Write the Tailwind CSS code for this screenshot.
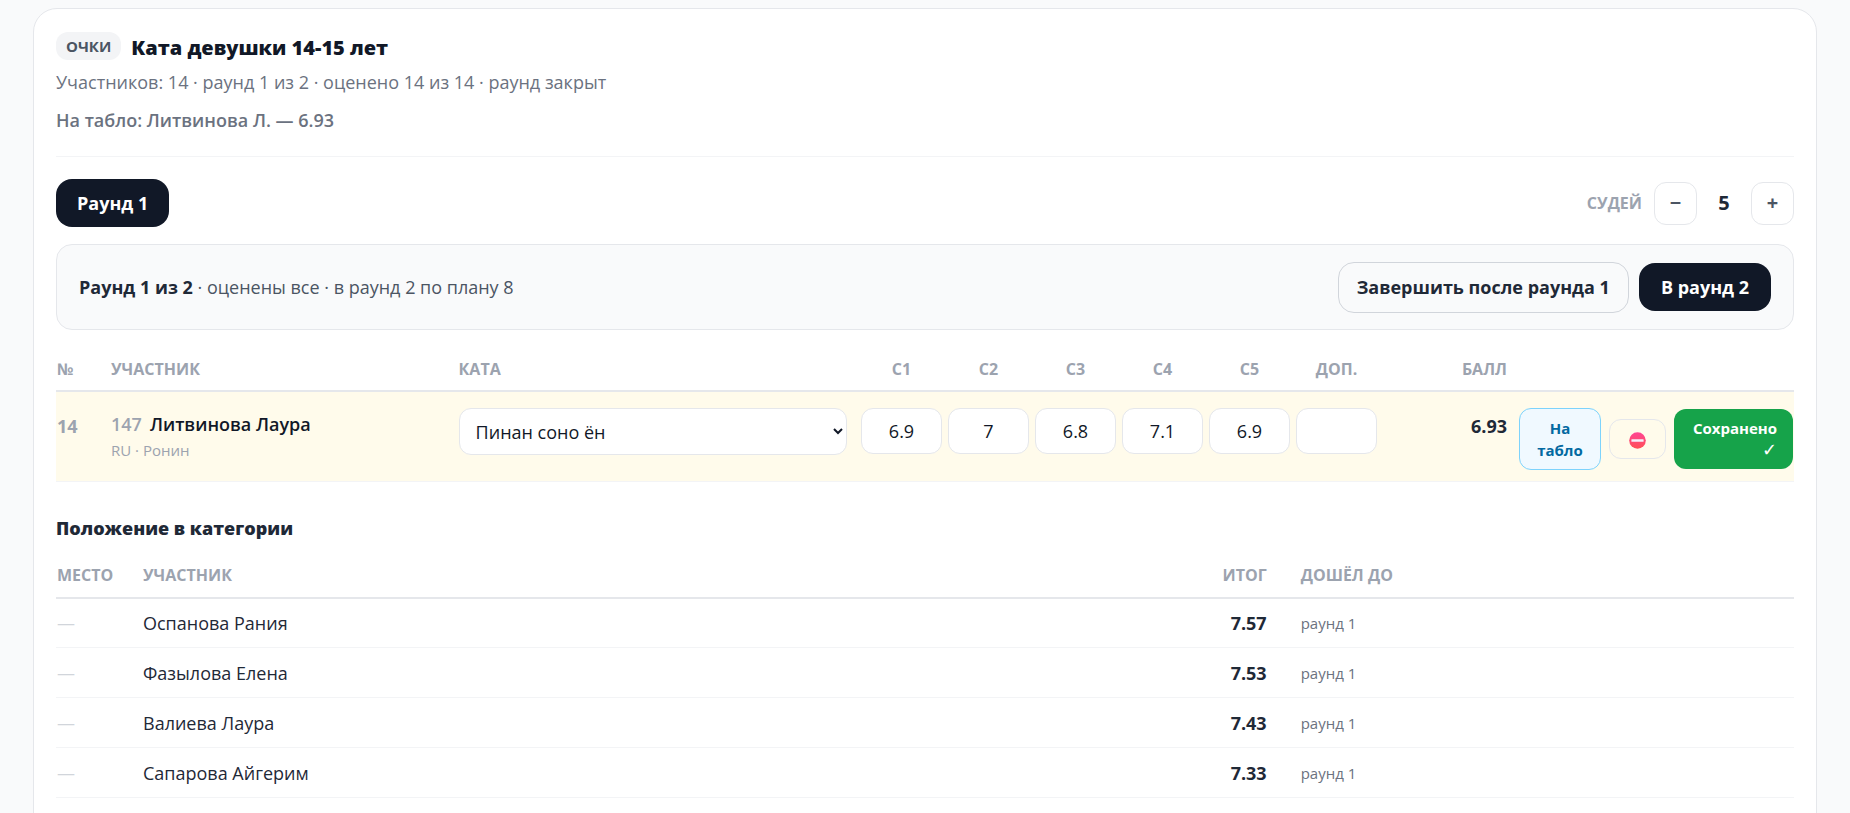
<!DOCTYPE html>
<html lang="ru">
<head>
  <meta charset="UTF-8" />
  <title>Ката девушки 14-15 лет</title>
  <meta name="viewport" content="width=device-width, initial-scale=1.0" />
  <script src="https://cdn.jsdelivr.net/npm/@tailwindcss/browser@4"></script>
</head>
<body class="bg-[#f9fafb] text-[#1f2937] font-['Open_Sans','Noto_Sans',sans-serif] text-[18px] leading-6 px-[33px] pt-2">

  <main class="bg-white border border-[#e5e7eb] rounded-3xl px-[22px] pt-[23px] pb-12">

    <!-- Category header -->
    <header class="border-b border-[#f3f4f6] pb-6">
      <div class="flex items-start gap-[10px]">
        <span class="bg-[#f3f4f6] text-[#4b5563] text-[15px] font-bold leading-7 px-[10px] rounded-xl">ОЧКИ</span>
        <h1 class="text-[20px] leading-8 font-extrabold text-[#111827]">Ката девушки 14-15 лет</h1>
      </div>
      <p class="mt-[6px] text-[#6b7280]">Участников: 14 · раунд 1 из 2 · оценено 14 из 14 · раунд закрыт</p>
      <p class="mt-[14px] text-[#6b7280] font-semibold">На табло: Литвинова Л. — 6.93</p>
    </header>

    <!-- Rounds and judges -->
    <div class="flex items-center justify-between mt-[22px]">
      <button type="button" class="h-12 px-[21px] rounded-2xl bg-[#111827] text-white font-bold">Раунд 1</button>
      <div class="flex items-center">
        <span class="text-[16px] font-bold text-[#9ca3af] mr-3">СУДЕЙ</span>
        <button type="button" aria-label="Меньше судей" class="size-[43px] border border-[#e5e7eb] rounded-xl text-[20px] font-bold text-[#4b5563]">−</button>
        <span class="w-[54px] text-center text-[20px] font-bold">5</span>
        <button type="button" aria-label="Больше судей" class="size-[43px] border border-[#e5e7eb] rounded-xl text-[20px] font-bold text-[#4b5563]">+</button>
      </div>
    </div>

    <!-- Round status -->
    <section class="flex items-center justify-between mt-[17px] h-[86px] px-[22px] bg-[#f9fafb] border border-[#e5e7eb] rounded-2xl">
      <p class="text-[#4b5563]"><b class="text-[#1f2937]">Раунд 1 из 2</b> · оценены все · в раунд 2 по плану 8</p>
      <div class="flex items-center gap-[10px]">
        <button type="button" class="h-[51px] px-[18px] rounded-2xl border border-[#d1d5db] font-bold">Завершить после раунда 1</button>
        <button type="button" class="h-12 px-[22px] rounded-2xl bg-[#111827] text-white font-bold">В раунд 2</button>
      </div>
    </section>

    <!-- Scores -->
    <table class="table-fixed w-full mt-[21px]">
      <colgroup>
        <col class="w-[53px]">
        <col class="w-[20%]">
        <col>
        <col class="w-[87px]">
        <col class="w-[87px]">
        <col class="w-[87px]">
        <col class="w-[87px]">
        <col class="w-[87px]">
        <col class="w-[87px]">
        <col class="w-[129px]">
        <col class="w-[285px]">
      </colgroup>
      <thead>
        <tr class="h-10 border-b-2 border-[#e5e7eb] text-[16px] text-[#9ca3af] text-left">
          <th class="px-px pb-1 font-bold">№</th>
          <th class="px-[2px] pb-1 font-bold">УЧАСТНИК</th>
          <th class="px-[2px] pb-1 font-bold">КАТА</th>
          <th class="pb-1 font-bold text-center">С1</th>
          <th class="pb-1 font-bold text-center">С2</th>
          <th class="pb-1 font-bold text-center">С3</th>
          <th class="pb-1 font-bold text-center">С4</th>
          <th class="pb-1 font-bold text-center">С5</th>
          <th class="pb-1 font-bold text-center">ДОП.</th>
          <th class="px-[2px] pb-1 font-bold text-right">БАЛЛ</th>
          <th></th>
        </tr>
      </thead>
      <tbody>
        <tr class="h-[90px] bg-[#fffbeb] border-b border-[#f3f4f6] align-top">
          <td class="px-px pt-[22px] font-bold text-[#9ca3af]">14</td>
          <td class="px-[2px] pt-5">
            <div><span class="font-semibold text-[#9ca3af] mr-2">147</span><span class="font-semibold text-[#111827]">Литвинова Лаура</span></div>
            <div class="mt-[2px] text-[15px] text-[#9ca3af]">RU · Ронин</div>
          </td>
          <td class="pl-[2px] pr-[11px] pt-4">
            <select aria-label="Ката" class="block w-full h-[47px] pl-3 bg-white border border-[#e5e7eb] rounded-xl text-[#111827]">
              <option>Пинан соно ён</option>
            </select>
          </td>
          <td class="px-[3px] pt-4"><input type="text" aria-label="С1" value="6.9" class="block w-full h-[46px] bg-white border border-[#e5e7eb] rounded-xl text-center text-[#111827]"></td>
          <td class="px-[3px] pt-4"><input type="text" aria-label="С2" value="7" class="block w-full h-[46px] bg-white border border-[#e5e7eb] rounded-xl text-center text-[#111827]"></td>
          <td class="px-[3px] pt-4"><input type="text" aria-label="С3" value="6.8" class="block w-full h-[46px] bg-white border border-[#e5e7eb] rounded-xl text-center text-[#111827]"></td>
          <td class="px-[3px] pt-4"><input type="text" aria-label="С4" value="7.1" class="block w-full h-[46px] bg-white border border-[#e5e7eb] rounded-xl text-center text-[#111827]"></td>
          <td class="px-[3px] pt-4"><input type="text" aria-label="С5" value="6.9" class="block w-full h-[46px] bg-white border border-[#e5e7eb] rounded-xl text-center text-[#111827]"></td>
          <td class="px-[3px] pt-4"><input type="text" aria-label="Дополнительный балл" value="" class="block w-full h-[46px] bg-white border border-[#e5e7eb] rounded-xl text-center text-[#111827]"></td>
          <td class="px-[2px] pt-[22px] text-right font-bold">6.93</td>
          <td class="pt-4">
            <div class="flex items-center justify-end gap-2 pr-px text-[15px] leading-[22px]">
              <button type="button" class="w-[82px] h-[62px] px-3 rounded-xl border border-[#7dd3fc] bg-[#f0f9ff] text-[#0369a1] font-bold">На табло</button>
              <button type="button" aria-label="Дисквалифицировать" class="flex items-center justify-center w-[57px] h-10 rounded-xl border border-[#e5e7eb]">
                <svg class="size-[17px] mt-[2px]" viewBox="0 0 17 17">
                  <defs>
                    <linearGradient id="stop" x1="0" y1="0" x2="0" y2="1">
                      <stop offset="0" stop-color="#ff4594" />
                      <stop offset="1" stop-color="#ff4f55" />
                    </linearGradient>
                  </defs>
                  <circle cx="8.5" cy="8.5" r="8.3" fill="url(#stop)" />
                  <rect x="2.4" y="7.2" width="12.2" height="2.6" rx="0.5" fill="#f5effa" />
                </svg>
              </button>
              <button type="button" class="w-[119px] h-[60px] px-4 rounded-xl bg-[#16a34a] text-white font-bold text-right">Сохранено <span class="font-['DejaVu_Sans'] text-[18px]">✓</span></button>
            </div>
          </td>
        </tr>
      </tbody>
    </table>

    <!-- Standings -->
    <h2 class="mt-8 text-[18px] leading-7 font-extrabold">Положение в категории</h2>
    <table class="table-fixed w-full mt-3">
      <colgroup>
        <col class="w-[85px]">
        <col>
        <col class="w-[150px]">
        <col class="w-[28.5%]">
      </colgroup>
      <thead>
        <tr class="h-11 border-b-2 border-[#e5e7eb] text-[16px] text-[#9ca3af] text-left">
          <th class="px-px font-bold">МЕСТО</th>
          <th class="px-[2px] font-bold">УЧАСТНИК</th>
          <th class="pr-8 font-bold text-right">ИТОГ</th>
          <th class="px-[2px] font-bold">ДОШЁЛ ДО</th>
        </tr>
      </thead>
      <tbody>
        <tr class="h-[50px] border-b border-[#f3f4f6]">
          <td class="px-px text-[#d1d5db]">—</td>
          <td class="px-[2px]">Оспанова Рания</td>
          <td class="pr-8 text-right font-bold">7.57</td>
          <td class="px-[2px] text-[15px] text-[#6b7280]">раунд 1</td>
        </tr>
        <tr class="h-[50px] border-b border-[#f3f4f6]">
          <td class="px-px text-[#d1d5db]">—</td>
          <td class="px-[2px]">Фазылова Елена</td>
          <td class="pr-8 text-right font-bold">7.53</td>
          <td class="px-[2px] text-[15px] text-[#6b7280]">раунд 1</td>
        </tr>
        <tr class="h-[50px] border-b border-[#f3f4f6]">
          <td class="px-px text-[#d1d5db]">—</td>
          <td class="px-[2px]">Валиева Лаура</td>
          <td class="pr-8 text-right font-bold">7.43</td>
          <td class="px-[2px] text-[15px] text-[#6b7280]">раунд 1</td>
        </tr>
        <tr class="h-[50px] border-b border-[#f3f4f6]">
          <td class="px-px text-[#d1d5db]">—</td>
          <td class="px-[2px]">Сапарова Айгерим</td>
          <td class="pr-8 text-right font-bold">7.33</td>
          <td class="px-[2px] text-[15px] text-[#6b7280]">раунд 1</td>
        </tr>
      </tbody>
    </table>
  </main>

</body>
</html>
